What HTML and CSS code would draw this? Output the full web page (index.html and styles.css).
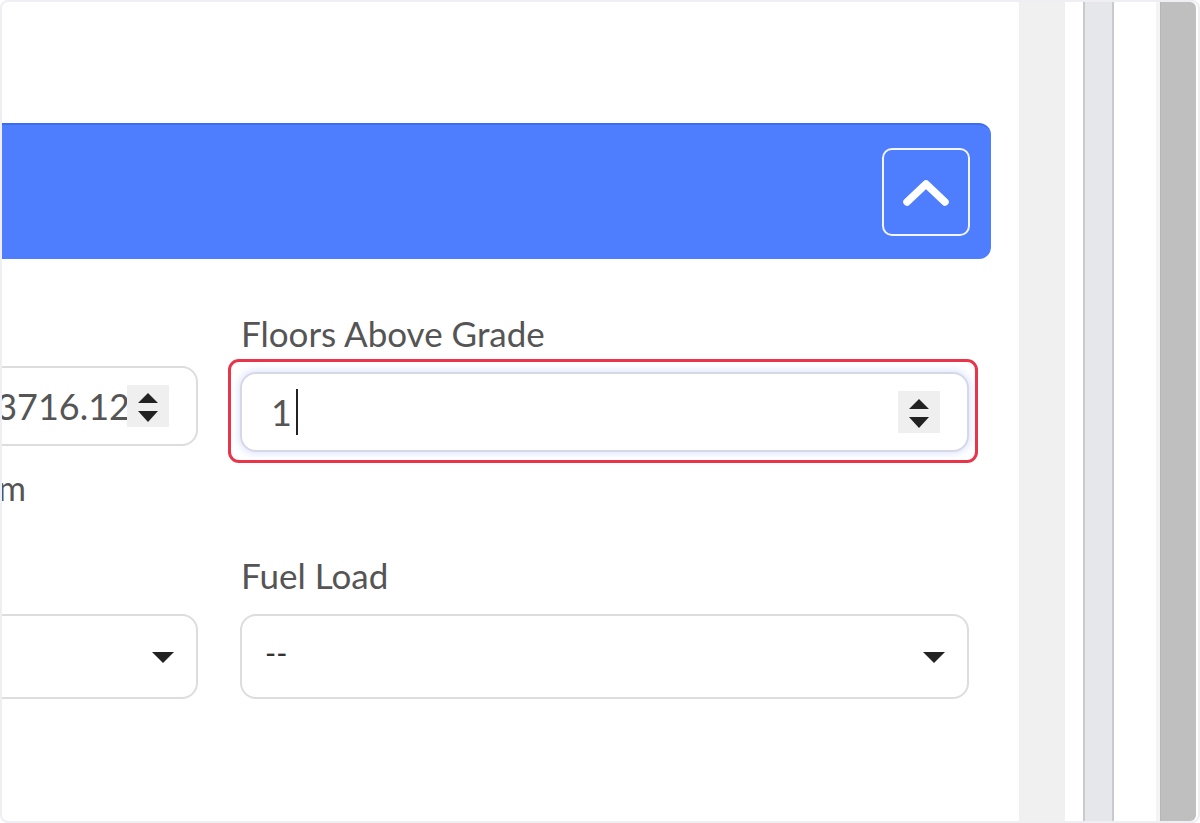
FILE: index.html
```html
<!DOCTYPE html>
<html lang="en">
<head>
<meta charset="utf-8">
<title>Building details</title>
<link rel="stylesheet" href="styles.css">
</head>
<body>
<div class="frame">
  <main class="content">
    <section class="card">
      <header class="card-head">
        <button class="toggle" type="button" aria-label="Collapse">
          <svg width="50" height="32" viewBox="0 0 50 32"><polyline points="6,26 25,8 44,26" fill="none" stroke="#fff" stroke-width="7.5" stroke-linecap="round" stroke-linejoin="round"/></svg>
        </button>
      </header>
      <div class="form-grid">
        <div class="field">
          <label class="label">Gross Floor Area</label>
          <div class="input">
            <span class="value value-end">3716.12</span>
            <span class="spin"><svg width="42" height="42" viewBox="0 0 42 42"><path d="M11 18 L31 18 L21 8 Z M11 26 L31 26 L21 37 Z" fill="#222"/></svg></span>
          </div>
          <div class="help">Gross floor area in sq m</div>
        </div>
        <div class="field field-focus">
          <label class="label">Floors Above Grade</label>
          <div class="input focused">
            <span class="value">1<span class="cursor"></span></span>
            <span class="spin"><svg width="42" height="42" viewBox="0 0 42 42"><path d="M11 18 L31 18 L21 8 Z M11 26 L31 26 L21 37 Z" fill="#222"/></svg></span>
            <span class="highlight"></span>
          </div>
        </div>
        <div class="field row2">
          <label class="label">Construction Type</label>
          <div class="select">
            <span class="opt"></span>
            <svg class="caret" width="22" height="12" viewBox="0 0 22 12"><path d="M0 1 L22 1 L11 12 Z" fill="#222"/></svg>
          </div>
        </div>
        <div class="field row2">
          <label class="label">Fuel Load</label>
          <div class="select">
            <span class="opt">--</span>
            <svg class="caret" width="22" height="12" viewBox="0 0 22 12"><path d="M0 1 L22 1 L11 12 Z" fill="#222"/></svg>
          </div>
        </div>
      </div>
    </section>
  </main>
  <aside class="rail">
    <div class="strip strip-a"></div>
    <div class="gap g1"></div>
    <div class="strip strip-b"></div>
    <div class="gap g2"></div>
    <div class="strip strip-edge"></div>
    <div class="strip strip-c"></div>
  </aside>
</div>
</body>
</html>
```
FILE: styles.css
```css
html, body {
  margin: 0;
  padding: 0;
  background: #ffffff;
}
body {
  font-family: Lato, "Open Sans", sans-serif;
  color: #555555;
}
.frame {
  width: 1200px;
  height: 823px;
  box-sizing: border-box;
  border: 2px solid #eeeef3;
  border-radius: 8px;
  overflow: hidden;
  display: flex;
  background: #ffffff;
}
.content {
  width: 1017px;
  flex: none;
  overflow: hidden;
  padding-top: 121px;
}
.card {
  width: 1544px;
  margin-left: -555px;
}
.card-head {
  height: 136px;
  box-sizing: border-box;
  background: #4e7dfe;
  border-top: 2px solid #3a6cf6;
  border-radius: 12px;
  display: flex;
  justify-content: flex-end;
  align-items: center;
  padding-right: 21px;
}
.toggle {
  width: 88px;
  height: 88px;
  box-sizing: border-box;
  border: 2px solid rgba(255, 255, 255, 0.92);
  border-radius: 10px;
  background: transparent;
  display: flex;
  align-items: center;
  justify-content: center;
  padding: 0;
}
.toggle svg {
  display: block;
}
.form-grid {
  display: grid;
  grid-template-columns: 1fr 1fr;
  column-gap: 42px;
  row-gap: 45px;
  padding: 53px 22px 0 22px;
}
.field {
  display: flex;
  flex-direction: column;
  min-width: 0;
}
.label {
  font-size: 35px;
  line-height: 42px;
  color: #555555;
  padding-left: 1px;
  white-space: nowrap;
}
.input {
  position: relative;
  margin-top: 12px;
  height: 80px;
  box-sizing: border-box;
  border: 2px solid #dddddd;
  border-radius: 16px;
  display: flex;
  align-items: center;
  padding: 0 27px 0 29px;
  background: #fff;
}
.field-focus .input {
  margin-top: 18px;
}
.input.focused {
  border-color: #d6d8e6;
  box-shadow: 0 0 6px 2px rgba(120, 140, 255, 0.22);
}
.value {
  flex: 1;
  font-size: 36px;
  line-height: 42px;
  color: #555555;
  display: flex;
  align-items: center;
  white-space: nowrap;
}
.value-end {
  justify-content: flex-end;
  margin-right: -3px;
}
.cursor {
  display: inline-block;
  width: 2px;
  height: 46px;
  background: #222;
  margin-left: 4px;
}
.spin {
  width: 42px;
  height: 42px;
  background: #efefef;
  flex: none;
  display: block;
}
.spin svg {
  display: block;
}
.highlight {
  position: absolute;
  top: -15px;
  bottom: -13px;
  left: -14px;
  right: -11px;
  border: 3px solid #e8354a;
  border-radius: 11px;
  pointer-events: none;
}
.help {
  margin-top: 21px;
  font-size: 34px;
  line-height: 42px;
  color: #555555;
  text-align: right;
  padding-right: 172px;
}
.select {
  margin-top: 18px;
  height: 85px;
  box-sizing: border-box;
  border: 2px solid #dddddd;
  border-radius: 16px;
  display: flex;
  align-items: center;
  padding: 0 22px 0 23px;
}
.opt {
  flex: 1;
  font-size: 30px;
  color: #333333;
  line-height: 36px;
  padding-bottom: 9px;
}
.caret {
  display: block;
  flex: none;
}
.rail {
  flex: 1;
  display: flex;
  padding-right: 2px;
}
.strip, .gap {
  flex: none;
  height: 100%;
}
.strip-a {
  width: 46px;
  background: #f0f0f0;
}
.g1 {
  width: 18px;
}
.strip-b {
  width: 31px;
  box-sizing: border-box;
  background: #e6e7eb;
  border-left: 2px solid #c9cacd;
  border-right: 2px solid #c9cacd;
}
.g2 {
  width: 42px;
}
.strip-edge {
  width: 4px;
  background: #f4f4f4;
}
.strip-c {
  width: 36px;
  box-sizing: border-box;
  background: #bfbfbf;
  border-left: 1px solid #b6b6b6;
  border-top-right-radius: 6px;
  border-bottom-right-radius: 6px;
}
```
